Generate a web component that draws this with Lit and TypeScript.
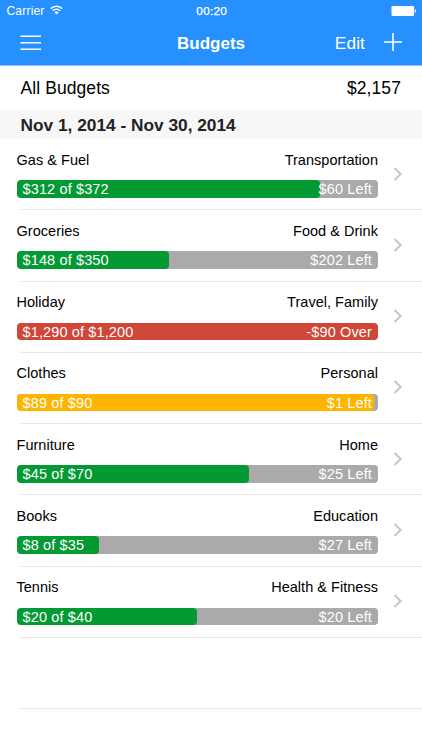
import { LitElement, html, css } from "lit";
import { customElement, property } from "lit/decorators.js";
import { styleMap } from "lit/directives/style-map.js";

interface Budget {
  name: string;
  category: string;
  spent: string;
  rest: string;
  fill: number;
  tone: "green" | "red" | "amber";
}

const BUDGETS: Budget[] = [
  { name: "Gas & Fuel", category: "Transportation", spent: "$312 of $372", rest: "$60 Left", fill: 83.9, tone: "green" },
  { name: "Groceries", category: "Food & Drink", spent: "$148 of $350", rest: "$202 Left", fill: 42.3, tone: "green" },
  { name: "Holiday", category: "Travel, Family", spent: "$1,290 of $1,200", rest: "-$90 Over", fill: 100, tone: "red" },
  { name: "Clothes", category: "Personal", spent: "$89 of $90", rest: "$1 Left", fill: 98.9, tone: "amber" },
  { name: "Furniture", category: "Home", spent: "$45 of $70", rest: "$25 Left", fill: 64.3, tone: "green" },
  { name: "Books", category: "Education", spent: "$8 of $35", rest: "$27 Left", fill: 22.9, tone: "green" },
  { name: "Tennis", category: "Health & Fitness", spent: "$20 of $40", rest: "$20 Left", fill: 50, tone: "green" },
];

@customElement("budget-row")
export class BudgetRow extends LitElement {
  @property({ attribute: false }) budget!: Budget;

  static styles = css`
    :host {
      display: grid;
      grid-template-columns: 361.5px 1fr;
      box-sizing: border-box;
      height: 71.25px;
      padding-left: 16.5px;
      font-size: 14.5px;
      color: #000;
      background: linear-gradient(#e8e8ea, #e8e8ea) 20px 100% / 100% 1px no-repeat;
    }
    .labels {
      display: flex;
      justify-content: space-between;
      padding-top: 10.6px;
      height: 20px;
      line-height: 20px;
      letter-spacing: 0.03px;
    }
    .track {
      position: relative;
      display: flex;
      justify-content: space-between;
      margin-top: 10.6px;
      height: 17.5px;
      padding: 0 6px;
      line-height: 18.4px;
      border-radius: 4px;
      overflow: hidden;
      background: #aaa;
      color: #fff;
      letter-spacing: 0.13px;
    }
    .fill {
      position: absolute;
      inset: 0 auto 0 0;
      border-radius: 4px;
    }
    .green { background: #039a34; }
    .red { background: #d04637; }
    .amber { background: #ffb400; }
    .text { position: relative; }
    .chevron {
      width: 10px;
      height: 14px;
      margin: 27.6px 0 0 14.5px;
      fill: none;
      stroke: #c4c4c9;
      stroke-width: 1.9;
    }
  `;

  render() {
    const b = this.budget;
    return html`
      <div>
        <div class="labels"><span>${b.name}</span><span>${b.category}</span></div>
        <div class="track">
          <div class="fill ${b.tone}" style=${styleMap({ width: `${b.fill}%` })}></div>
          <span class="text">${b.spent}</span><span class="text">${b.rest}</span>
        </div>
      </div>
      <svg class="chevron" viewBox="0 0 10 14"><path d="M1.5 1l6.2 6-6.2 6" /></svg>
    `;
  }
}

@customElement("app-root")
export class AppRoot extends LitElement {
  static styles = css`
    :host {
      display: block;
      height: 750px;
      overflow: hidden;
      background: #fff;
      font-family: "Liberation Sans", Arial, sans-serif;
    }
    .header {
      height: 65px;
      background: #2790ff;
      color: #fff;
      border-bottom: 1px solid #8cc4fb;
    }
    .status {
      display: grid;
      grid-template-columns: 1fr auto 1fr;
      align-items: center;
      height: 22px;
      padding: 0 5px 0 6.5px;
      font-size: 12px;
      line-height: 22px;
    }
    .carrier { display: flex; align-items: center; gap: 5.5px; letter-spacing: 0.2px; }
    .time { font-size: 11.8px; letter-spacing: 0.25px; -webkit-text-stroke: 0.25px #fff; }
    .wifi { width: 13px; height: 10px; margin-top: -2px; }
    .battery { justify-self: end; width: 26px; height: 10px; }
    .nav {
      display: grid;
      grid-template-columns: 1fr auto 1fr;
      align-items: center;
      height: 43px;
      padding: 0 20px;
    }
    .menu { width: 21px; height: 16px; margin-top: -2px; }
    .title { font-size: 17px; font-weight: 700; }
    .actions { display: flex; justify-content: flex-end; align-items: center; gap: 19px; font-size: 17.3px; letter-spacing: 0.1px; }
    .plus { width: 18px; height: 18px; margin-top: -3px; }
    .total {
      display: flex;
      justify-content: space-between;
      height: 44px;
      padding: 0 21px 0 20.5px;
      font-size: 17.5px;
      line-height: 45px;
      letter-spacing: 0.08px;
    }
    .period {
      height: 28.5px;
      margin-bottom: 0.5px;
      padding-left: 20.5px;
      line-height: 31px;
      font-size: 17.3px;
      font-weight: 700;
      background: #f7f7f7;
      color: #222;
    }
    .blank {
      height: 71.25px;
      background: linear-gradient(#e8e8ea, #e8e8ea) 20px 100% / 100% 1px no-repeat;
    }
  `;

  render() {
    return html`
      <div class="header">
        <div class="status">
          <span class="carrier">
            Carrier
            <svg class="wifi" viewBox="0 0 13 10" fill="none" stroke="#fff" stroke-width="1.5">
              <path d="M.8 3.6a8.2 8.2 0 0 1 11.4 0" />
              <path d="M2.9 5.8a5.2 5.2 0 0 1 7.2 0" />
              <path d="M6.5 9.5L4.4 7.4a3 3 0 0 1 4.2 0z" fill="#fff" stroke="none" />
            </svg>
          </span>
          <span class="time">00:20</span>
          <svg class="battery" viewBox="0 0 26 10" fill="#fff">
            <rect x="0.5" width="22.6" height="10" rx="1.2" />
            <path d="M23.8 3.2c1.8.5 1.8 3.1 0 3.6z" />
          </svg>
        </div>
        <div class="nav">
          <svg class="menu" viewBox="0 0 21 16" stroke="#fff" stroke-width="1.4">
            <path d="M.5 1.2h20.5M.5 7.7h20.5M.5 14.2h20.5" />
          </svg>
          <span class="title">Budgets</span>
          <div class="actions">
            <span>Edit</span>
            <svg class="plus" viewBox="0 0 18 18" stroke="#fff" stroke-width="1.5">
              <path d="M9 0v18M0 9h18" />
            </svg>
          </div>
        </div>
      </div>
      <div class="total"><span>All Budgets</span><span>$2,157</span></div>
      <div class="period">Nov 1, 2014 - Nov 30, 2014</div>
      ${BUDGETS.map((b) => html`<budget-row .budget=${b}></budget-row>`)}
      <div class="blank"></div>
    `;
  }
}
